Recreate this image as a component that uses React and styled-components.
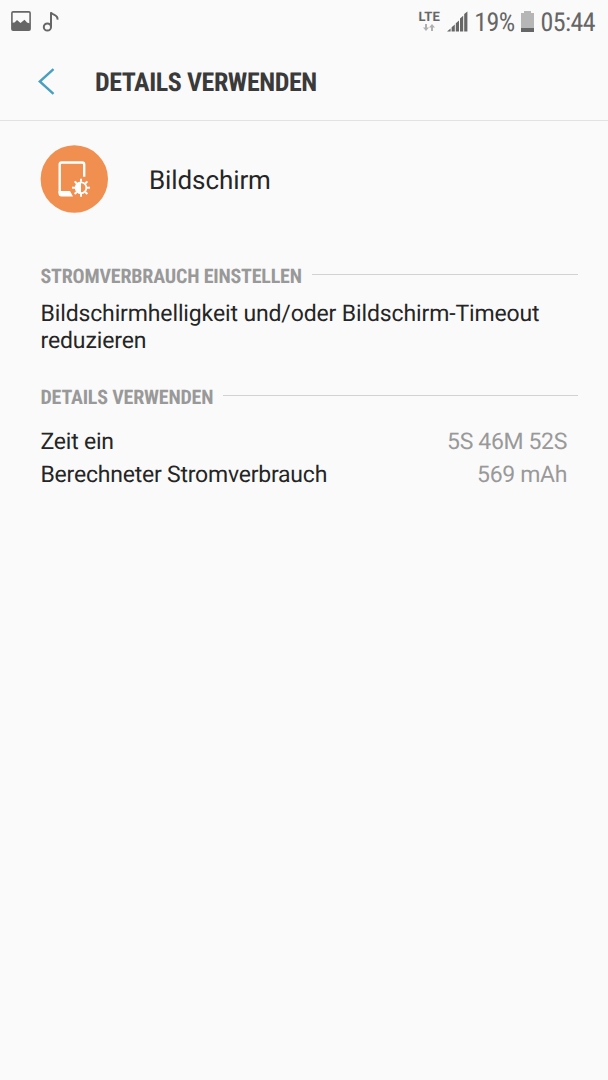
import React from "react";
import styled, { createGlobalStyle } from "styled-components";

const GlobalStyle = createGlobalStyle`
  * { box-sizing: border-box; }
  html, body { margin: 0; background: #fafafa; }
  body {
    font-family: Roboto, "Liberation Sans", sans-serif;
    color: #252525;
    text-rendering: geometricPrecision;
  }
`;

const Screen = styled.div`
  width: 608px;
  min-height: 1080px;
  background: #fafafa;
  overflow: hidden;
`;

const StatusBar = styled.header`
  display: flex;
  justify-content: space-between;
  height: 43px;
  padding: 0 13px 0 11px;
  color: #666;
`;

const StatusGroup = styled.div`
  display: flex;
  align-items: center;
  gap: ${(p) => p.$gap}px;
  padding-bottom: 1px;
`;

const Condensed = styled.span`
  font-family: "Roboto Condensed", Roboto, sans-serif;
  font-stretch: 75%;
  white-space: nowrap;
`;

const StatusText = styled(Condensed)`
  padding-top: 4px;
  font-size: 26px;
  line-height: 38px;
  letter-spacing: -0.6px;
`;

const Network = styled.div`
  display: flex;
  flex-direction: column;
  align-items: center;
  width: 22px;
  padding-top: 1px;
  font-size: 13px;
  font-weight: 700;
  line-height: 12px;
  letter-spacing: 0.2px;
`;

const TitleBar = styled.div`
  display: flex;
  align-items: center;
  height: 78px;
  padding-left: 38px;
  gap: 40px;
  border-bottom: 1px solid #e2e2e2;
`;

const Title = styled(Condensed).attrs({ as: "h1" })`
  margin: 0;
  padding-top: 2px;
  font-size: 26px;
  font-weight: 700;
  letter-spacing: -0.42px;
  color: #3a3a3a;
`;

const AppRow = styled.div`
  display: flex;
  align-items: center;
  gap: 41px;
  padding: 24px 40px 0;
`;

const AppName = styled.div`
  padding-top: 3px;
  font-size: 26px;
  line-height: 30px;
  letter-spacing: -0.1px;
`;

const Content = styled.main`
  padding: 0 30px 0 40.5px;
`;

const SectionHeader = styled.div`
  display: flex;
  align-items: center;
  gap: 10px;
  height: 24px;
  margin-top: ${(p) => p.$top}px;
`;

const SectionTitle = styled(Condensed).attrs({ as: "h2" })`
  margin: 0;
  padding-top: 1px;
  font-size: 20px;
  line-height: 24px;
  font-weight: 700;
  letter-spacing: -0.2px;
  color: #999;
`;

const Rule = styled.div`
  flex: 1;
  height: 1px;
  margin-top: -2px;
  background: #d2d2d2;
`;

const Advice = styled.p`
  margin: 14px 0 0;
  font-size: 23px;
  line-height: 26.5px;
  letter-spacing: -0.13px;
`;

const DetailList = styled.div`
  margin-top: 17px;
  padding-right: 11px;
`;

const DetailRow = styled.div`
  display: flex;
  justify-content: space-between;
  font-size: 23px;
  line-height: 33px;
  letter-spacing: -0.22px;
`;

const DetailValue = styled.span`
  letter-spacing: -0.35px;
  color: #999;
`;

const PictureIcon = () => (
  <svg width="20" height="20" viewBox="0 0 20 20">
    <rect x="0.9" y="0.9" width="18.2" height="18.2" rx="1.2" fill="none" stroke="#666" strokeWidth="1.6" />
    <path d="M1 11.8 3.5 11.5 6 9 9.5 12 13.5 8.8 16 11.5 19 12.5v6.5H1Z" fill="#666" />
  </svg>
);

const NoteIcon = () => (
  <svg width="17" height="21" viewBox="0 0 17 21" fill="none" stroke="#666" strokeWidth="2">
    <circle cx="5.4" cy="16" r="3.6" />
    <path d="M9 16V1.2C9.8 4.4 16.2 3.2 15.5 8.6" />
  </svg>
);

const TransferIcon = () => (
  <svg width="12" height="7" viewBox="0 0 12 7" fill="#b0b0b0">
    <path d="M2 0h2v3.4h2L3 7 0 3.4h2ZM8 7h2V3.6h2L9 0 6 3.6h2Z" />
  </svg>
);

const SignalIcon = () => (
  <svg width="21" height="21" viewBox="0 0 21 21" fill="#666">
    <path d="M0 20.5 3.6 17.4V20.5ZM4.6 16.2l3.2-2.6v6.9H4.6ZM8.8 12.2l3.2-2.8v11.1H8.8ZM13 7.6 16.2 4.8v15.7H13ZM17.2 3 20.4.4v20.1h-3.2Z" />
  </svg>
);

const BatteryIcon = () => (
  <svg width="13" height="21" viewBox="0 0 13 21">
    <path d="M3 0h7v2h3v19H0V2h3Z" fill="#b6b6b6" />
    <path d="M0 17h13v4H0Z" fill="#666" />
  </svg>
);

const BackIcon = () => (
  <svg width="17" height="27" viewBox="0 0 17 27" fill="none" stroke="#489fc0" strokeWidth="2.4">
    <path d="M15.5 1.2 1.8 13.5 15.5 25.8" />
  </svg>
);

const rays = [0, 45, 90, 135, 180, 225, 270, 315];

const DisplayIcon = () => (
  <svg width="68" height="68" viewBox="0 0 68 68">
    <circle cx="34.3" cy="34" r="33.7" fill="#f08f50" />
    <path d="M44.2 31.8V19.5a2 2 0 0 0-2-2H21.7a2 2 0 0 0-2 2V48" fill="none" stroke="#fff" strokeWidth="2.4" />
    <path d="M18.5 46H30l3 5.6H21.5a3 3 0 0 1-3-3Z" fill="#fff" />
    <g transform="translate(41 42.7)">
      <circle r="5.4" fill="none" stroke="#fff" strokeWidth="1.8" />
      <path d="M0-5.4a5.4 5.4 0 0 0 0 10.8Z" fill="#fff" />
      {rays.map((angle) => (
        <path key={angle} d="M-1-6H1V-9H-1Z" fill="#fff" transform={`rotate(${angle})`} />
      ))}
    </g>
  </svg>
);

const details = [
  ["Zeit ein", "5S 46M 52S"],
  ["Berechneter Stromverbrauch", "569 mAh"],
];

export default function App() {
  return (
    <Screen>
      <GlobalStyle />
      <StatusBar>
        <StatusGroup $gap={11}>
          <PictureIcon />
          <NoteIcon />
        </StatusGroup>
        <StatusGroup $gap={6.5}>
          <Network>
            LTE
            <TransferIcon />
          </Network>
          <SignalIcon />
          <StatusText>19%</StatusText>
          <BatteryIcon />
          <StatusText>05:44</StatusText>
        </StatusGroup>
      </StatusBar>
      <TitleBar>
        <BackIcon />
        <Title>DETAILS VERWENDEN</Title>
      </TitleBar>
      <AppRow>
        <DisplayIcon />
        <AppName>Bildschirm</AppName>
      </AppRow>
      <Content>
        <SectionHeader $top={50}>
          <SectionTitle>STROMVERBRAUCH EINSTELLEN</SectionTitle>
          <Rule />
        </SectionHeader>
        <Advice>Bildschirmhelligkeit und/oder Bildschirm-Timeout reduzieren</Advice>
        <SectionHeader $top={30}>
          <SectionTitle>DETAILS VERWENDEN</SectionTitle>
          <Rule />
        </SectionHeader>
        <DetailList>
          {details.map(([label, value]) => (
            <DetailRow key={label}>
              <span>{label}</span>
              <DetailValue>{value}</DetailValue>
            </DetailRow>
          ))}
        </DetailList>
      </Content>
    </Screen>
  );
}
